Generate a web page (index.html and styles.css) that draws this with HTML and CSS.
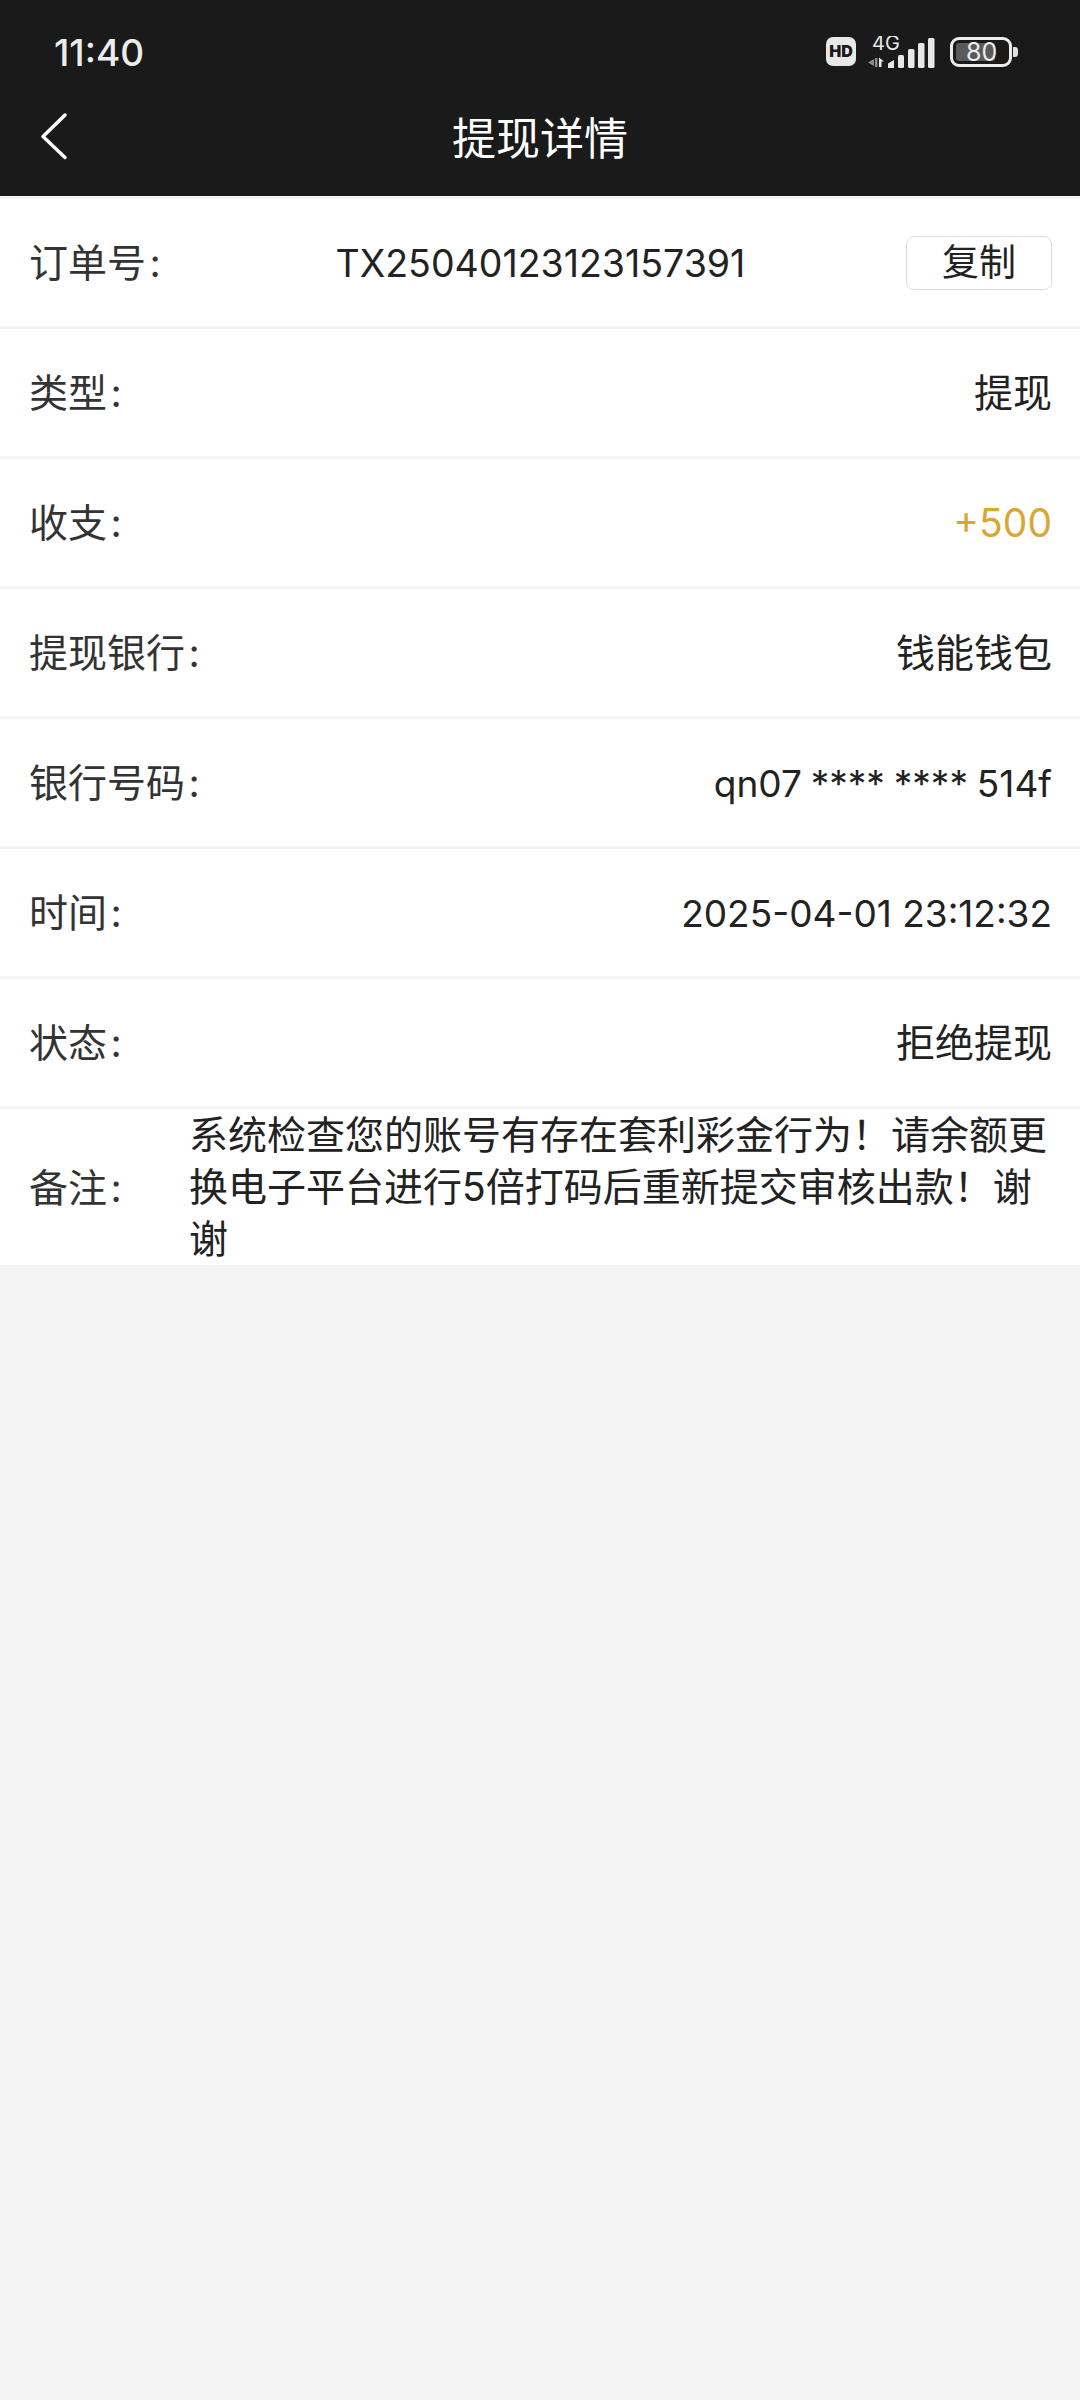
FILE: index.html
```html
<!DOCTYPE html>
<html lang="zh-CN">
<head>
    <meta charset="UTF-8">
    <meta name="viewport" content="width=device-width, initial-scale=1.0">
    <title>提现详情</title>
    <link rel="stylesheet" href="styles.css">
</head>
<body>
    <header class="top">
        <div class="status-bar">
            <span class="clock">11:40</span>
            <div class="status-icons">
                <span class="hd">HD</span>
                <svg class="signal" width="68" height="34" viewBox="0 0 68 34">
                    <text x="4" y="14" class="net">4G</text>
                    <path d="M0 26.500l6-3.500v7zM7 22h2.500v9H7z" fill="#8a8a8a"/>
                    <path d="M11 21.500l5 4-2.500 0v5.500H11z" fill="#e8e8e8"/>
                    <path d="M20 27.500l6-3.500v8h-6z" fill="#e8e8e8"/>
                    <rect x="30" y="19" width="6" height="13" rx="1.500" fill="#e8e8e8"/>
                    <rect x="40" y="13" width="6.500" height="19" rx="1.500" fill="#e8e8e8"/>
                    <rect x="50" y="7" width="6.500" height="25" rx="1.500" fill="#e8e8e8"/>
                    <rect x="60" y="2" width="6.500" height="30" rx="1.500" fill="#e8e8e8"/>
                </svg>
                <div class="battery">
                    <div class="battery-fill"></div>
                    <span class="battery-num">80</span>
                </div>
                <span class="battery-nub"></span>
            </div>
        </div>
        <div class="nav">
            <svg class="back" width="30" height="48" viewBox="0 0 30 48">
                <path d="M26 3L4 24.500 26 45.500" fill="none" stroke="#fff" stroke-width="3.500" stroke-linecap="round" stroke-linejoin="round"/>
            </svg>
            <h1 class="title">提现详情</h1>
        </div>
    </header>

    <main class="details">
        <div class="row">
            <span class="label">订单号&#8202;:</span>
            <span class="order-no">TX25040123123157391</span>
            <button class="copy" type="button">复制</button>
        </div>
        <div class="row">
            <span class="label">类型&#8202;:</span>
            <span class="value">提现</span>
        </div>
        <div class="row">
            <span class="label">收支&#8202;:</span>
            <span class="gold">+500</span>
        </div>
        <div class="row">
            <span class="label">提现银行&#8202;:</span>
            <span class="value">钱能钱包</span>
        </div>
        <div class="row">
            <span class="label">银行号码&#8202;:</span>
            <span class="value-num card-no">qn07 **** **** 514f</span>
        </div>
        <div class="row">
            <span class="label">时间&#8202;:</span>
            <span class="value-num">2025-04-01 23:12:32</span>
        </div>
        <div class="row">
            <span class="label">状态&#8202;:</span>
            <span class="value">拒绝提现</span>
        </div>
        <div class="row row-note">
            <span class="label note-label">备注&#8202;:</span>
            <p class="note">系统检查您的账号有存在套利彩金行为！请余额更换电子平台进行5倍打码后重新提交审核出款！谢谢</p>
        </div>
    </main>
</body>
</html>
```

FILE: styles.css
```css
* {
    margin: 0;
    padding: 0;
    box-sizing: border-box;
}

body {
    font-family: "Inter", "Noto Sans CJK SC", sans-serif;
    background-color: #f3f3f3;
    color: #222;
    width: 1080px;
    min-height: 2400px;
}

/* Dark header */
.top {
    background-color: #1a1a1a;
    height: 196px;
    color: #fff;
}

.status-bar {
    height: 104px;
    padding: 37px 0 0 54px;
    display: flex;
    justify-content: space-between;
    align-items: flex-start;
}

.clock {
    font-size: 37px;
    line-height: 32px;
    font-weight: 500;
    color: #ececec;
}

.status-icons {
    display: flex;
    align-items: flex-start;
    padding-right: 62px;
}

.hd {
    width: 30px;
    height: 29px;
    background-color: #e8e8e8;
    border-radius: 7px;
    color: #1a1a1a;
    font-size: 16px;
    line-height: 29px;
    font-weight: 900;
    text-align: center;
}

.signal {
    margin-left: 12px;
    margin-top: -1px;
}

.net {
    font-size: 20px;
    fill: #e8e8e8;
}

.battery {
    position: relative;
    width: 62px;
    height: 30px;
    margin-left: 14px;
    border: 3px solid #ececec;
    border-radius: 9px;
}

.battery-fill {
    position: absolute;
    left: 3px;
    top: 3px;
    bottom: 3px;
    width: 39px;
    background-color: #5a5a5a;
    border-radius: 3px;
}

.battery-num {
    position: absolute;
    left: 13px;
    top: -2px;
    font-size: 25px;
    line-height: 28px;
    color: #ececec;
}

.battery-nub {
    width: 5px;
    height: 10px;
    margin: 10px 0 0 1px;
    background-color: #e0e0e0;
    border-radius: 0 3px 3px 0;
}

.nav {
    position: relative;
    height: 66px;
    display: flex;
    justify-content: center;
    align-items: center;
}

.back {
    position: absolute;
    left: 39px;
    top: 8px;
}

.title {
    font-size: 44px;
    font-weight: 400;
    line-height: 66px;
    padding-top: 3px;
}

/* Detail rows */
.details {
    margin-top: 3px;
}

.row {
    height: 130px;
    padding: 0 28px 0 29px;
    background-color: #fff;
    border-bottom: 3px solid #f3f3f3;
    display: flex;
    justify-content: space-between;
    align-items: center;
    font-size: 39px;
}

.label {
    color: #333;
    white-space: nowrap;
    padding-bottom: 5px;
}

.value {
    text-align: right;
    padding-bottom: 5px;
}

/* latin and digits run smaller than the chinese text */
.value-num {
    font-size: 37px;
    padding-top: 2px;
}

.card-no {
    word-spacing: -1.5px;
}

.gold {
    font-size: 39px;
    color: #d8a736;
}

.order-no {
    flex: 1;
    font-size: 37.5px;
    padding: 2px 0 0 14px;
    text-align: center;
}

.copy {
    width: 146px;
    height: 54px;
    background-color: #fff;
    border: 1px solid #ddd;
    border-radius: 8px;
    font-family: inherit;
    font-size: 37px;
    line-height: 50px;
    color: #222;
}

.row-note {
    height: 156px;
    border-bottom: none;
    justify-content: flex-start;
}

.note-label {
    flex: 0 0 160px;
}

.note {
    flex: 1;
    line-height: 52px;
}
```
